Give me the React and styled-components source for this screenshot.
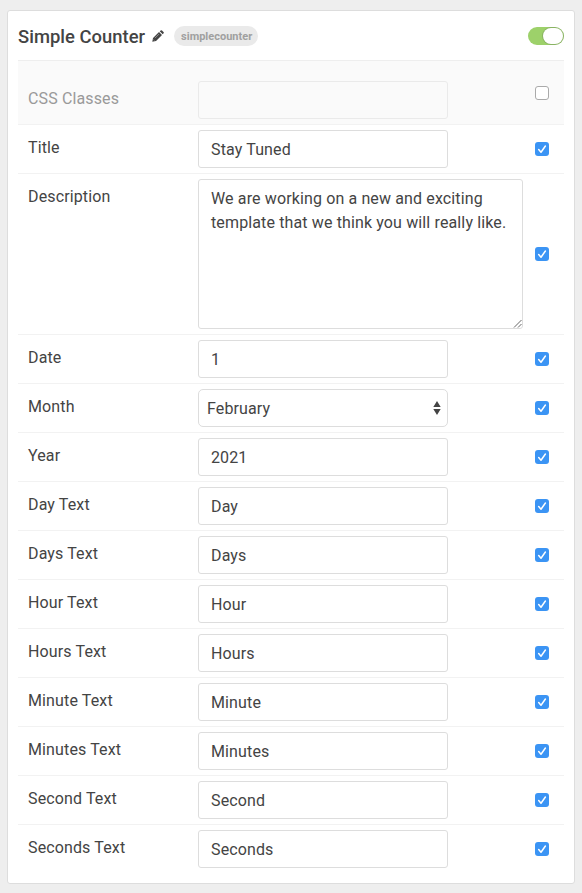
import React, { useState } from "react";
import styled, { createGlobalStyle, css } from "styled-components";

const GlobalStyle = createGlobalStyle`
  *, *::before, *::after { box-sizing: border-box; }
  body {
    margin: 0;
    background: #eee;
    color: #444;
    font: 400 16px/24px Roboto, "Liberation Sans", sans-serif;
  }
`;

const Page = styled.main`
  min-height: 893px;
  padding: 10px 7px 9px;
`;

const Card = styled.section`
  height: 874px;
  padding: 0 10px;
  background: #fff;
  border: 1px solid #ddd;
  border-radius: 3px;
`;

const Header = styled.header`
  display: flex;
  align-items: center;
  height: 50px;
  border-bottom: 1px solid #eee;
`;

const Title = styled.h4`
  margin: 2px 0 0;
  font-size: 18.4px;
  font-weight: 500;
  line-height: 24px;
  letter-spacing: 0.03px;
  white-space: nowrap;
`;

const Pencil = styled.svg`
  width: 12px;
  height: 12px;
  margin: 1px 0 0 7px;
  fill: #444;
`;

const Badge = styled.span`
  height: 20px;
  margin-left: 10px;
  padding: 1px 6px 0 7px;
  border-radius: 10px;
  background: #eaeaea;
  color: #a0a0a0;
  font-size: 11px;
  font-weight: 700;
  line-height: 19px;
`;

const Switch = styled.button`
  display: flex;
  justify-content: ${(p) => (p.$on ? "flex-end" : "flex-start")};
  width: 36px;
  height: 18px;
  margin-left: auto;
  padding: 1px;
  border: 0;
  border-radius: 9px;
  background: ${(p) => (p.$on ? "#9dd16a" : "#ccc")};
`;

const Knob = styled.span`
  width: 20px;
  height: 16px;
  border-radius: 8px;
  background: #fff;
  box-shadow: 0 0 0 1px rgba(80, 90, 80, 0.25);
`;

const Row = styled.div`
  display: grid;
  grid-template-columns: 170px 1fr 14px;
  align-items: start;
  padding: ${(p) => (p.$muted ? "20px" : "5px")} 15px 5px 10px;
  border-bottom: 1px solid #f2f2f2;
  background: ${(p) => (p.$muted ? "#fafafa" : "transparent")};

  &:last-child { border-bottom: 0; }
`;

const Label = styled.label`
  padding-top: 6px;
  color: ${(p) => (p.$muted ? "#999" : "#444")};
  letter-spacing: 0.13px;
`;

const fieldStyle = css`
  display: block;
  width: 250px;
  height: 38px;
  margin: 0;
  padding: 6px 12px;
  border: 1px solid #ddd;
  border-radius: 3px;
  background: #fff;
  color: #444;
  font: inherit;
  letter-spacing: 0.13px;
  outline: 0;
`;

const Input = styled.input`
  ${fieldStyle}
  &:disabled { background: #fafafa; border-color: #eaeaea; }
`;

const AreaFrame = styled.div`
  position: relative;
  width: 325px;
  height: 150px;
`;

const TextArea = styled.textarea`
  ${fieldStyle}
  width: 100%;
  height: 100%;
  padding-top: 7px;
  resize: none;
  overflow: hidden;
`;

const Grip = styled.svg`
  position: absolute;
  right: 1px;
  bottom: 1px;
  width: 9px;
  height: 9px;
  stroke: #555;
  stroke-width: 0.9;
`;

const SelectBox = styled.button`
  ${fieldStyle}
  display: flex;
  align-items: center;
  justify-content: space-between;
  padding: 2px 6px 0 8px;
  border-radius: 5px;
`;

const Arrows = styled.svg`
  width: 8px;
  height: 14px;
  margin-top: -2px;
  fill: #444;
`;

const Check = styled.button`
  display: grid;
  place-items: center;
  align-self: ${(p) => (p.$raised ? "start" : "center")};
  width: 14px;
  height: 14px;
  margin-top: ${(p) => (p.$raised ? "5px" : "0")};
  padding: 0;
  border: ${(p) => (p.$on ? "0" : "1px solid #aaa")};
  border-radius: 3px;
  background: ${(p) => (p.$on ? "#3b94f4" : "#fff")};

  svg { display: block; fill: none; stroke: #fff; stroke-width: 1.5; stroke-linecap: round; stroke-linejoin: round; }
`;

const fields = [
  { label: "CSS Classes", value: "", muted: true },
  { label: "Title", value: "Stay Tuned" },
  {
    label: "Description",
    kind: "area",
    value: "We are working on a new and exciting template that we think you will really like.",
  },
  { label: "Date", value: "1" },
  { label: "Month", kind: "select", value: "February" },
  { label: "Year", value: "2021" },
  { label: "Day Text", value: "Day" },
  { label: "Days Text", value: "Days" },
  { label: "Hour Text", value: "Hour" },
  { label: "Hours Text", value: "Hours" },
  { label: "Minute Text", value: "Minute" },
  { label: "Minutes Text", value: "Minutes" },
  { label: "Second Text", value: "Second" },
  { label: "Seconds Text", value: "Seconds" },
];

function Control({ id, kind, value, muted }) {
  if (kind === "area") {
    return (
      <AreaFrame>
        <TextArea id={id} defaultValue={value} spellCheck={false} />
        <Grip viewBox="0 0 9 9" aria-hidden="true">
          <path d="M1 8.5 8.5 1M5 8.5 8.5 5" />
        </Grip>
      </AreaFrame>
    );
  }
  if (kind === "select") {
    return (
      <SelectBox id={id} type="button" aria-haspopup="listbox">
        {value}
        <Arrows viewBox="0 0 8 14" aria-hidden="true">
          <path d="M4 0 7.7 6H.3zM.3 8h7.4L4 14z" />
        </Arrows>
      </SelectBox>
    );
  }
  return <Input id={id} defaultValue={value} disabled={muted} />;
}

function Field({ field }) {
  const [on, setOn] = useState(!field.muted);
  const id = field.label.toLowerCase().replace(/ /g, "-");
  return (
    <Row $muted={field.muted}>
      <Label htmlFor={id} $muted={field.muted}>{field.label}</Label>
      <Control id={id} kind={field.kind} value={field.value} muted={field.muted} />
      <Check
        type="button"
        role="checkbox"
        aria-checked={on}
        aria-label={field.label}
        $on={on}
        $raised={field.muted}
        onClick={() => setOn(!on)}
      >
        {on && (
          <svg width="14" height="14" viewBox="0 0 14 14">
            <path d="M3.7 7.6 6 10.2 10.4 4" />
          </svg>
        )}
      </Check>
    </Row>
  );
}

export default function App() {
  const [enabled, setEnabled] = useState(true);
  return (
    <>
      <GlobalStyle />
      <Page>
        <Card>
          <Header>
            <Title>Simple Counter</Title>
            <Pencil viewBox="0 0 12 12" aria-hidden="true">
              <path d="M.3 11.7 1 8 7 2 10 5 4 11zM7.7 1.3 8.7.4Q9.4-.1 10 .5L11.5 2Q12.1 2.6 11.6 3.3L10.7 4.3z" />
              <path d="M1.6 9.6 2.4 10.4M3 8.1 7.1 4" fill="none" stroke="#fff" strokeWidth=".4" />
            </Pencil>
            <Badge>simplecounter</Badge>
            <Switch
              type="button"
              role="switch"
              aria-checked={enabled}
              aria-label="Enabled"
              $on={enabled}
              onClick={() => setEnabled(!enabled)}
            >
              <Knob />
            </Switch>
          </Header>
          {fields.map((field) => (
            <Field key={field.label} field={field} />
          ))}
        </Card>
      </Page>
    </>
  );
}
